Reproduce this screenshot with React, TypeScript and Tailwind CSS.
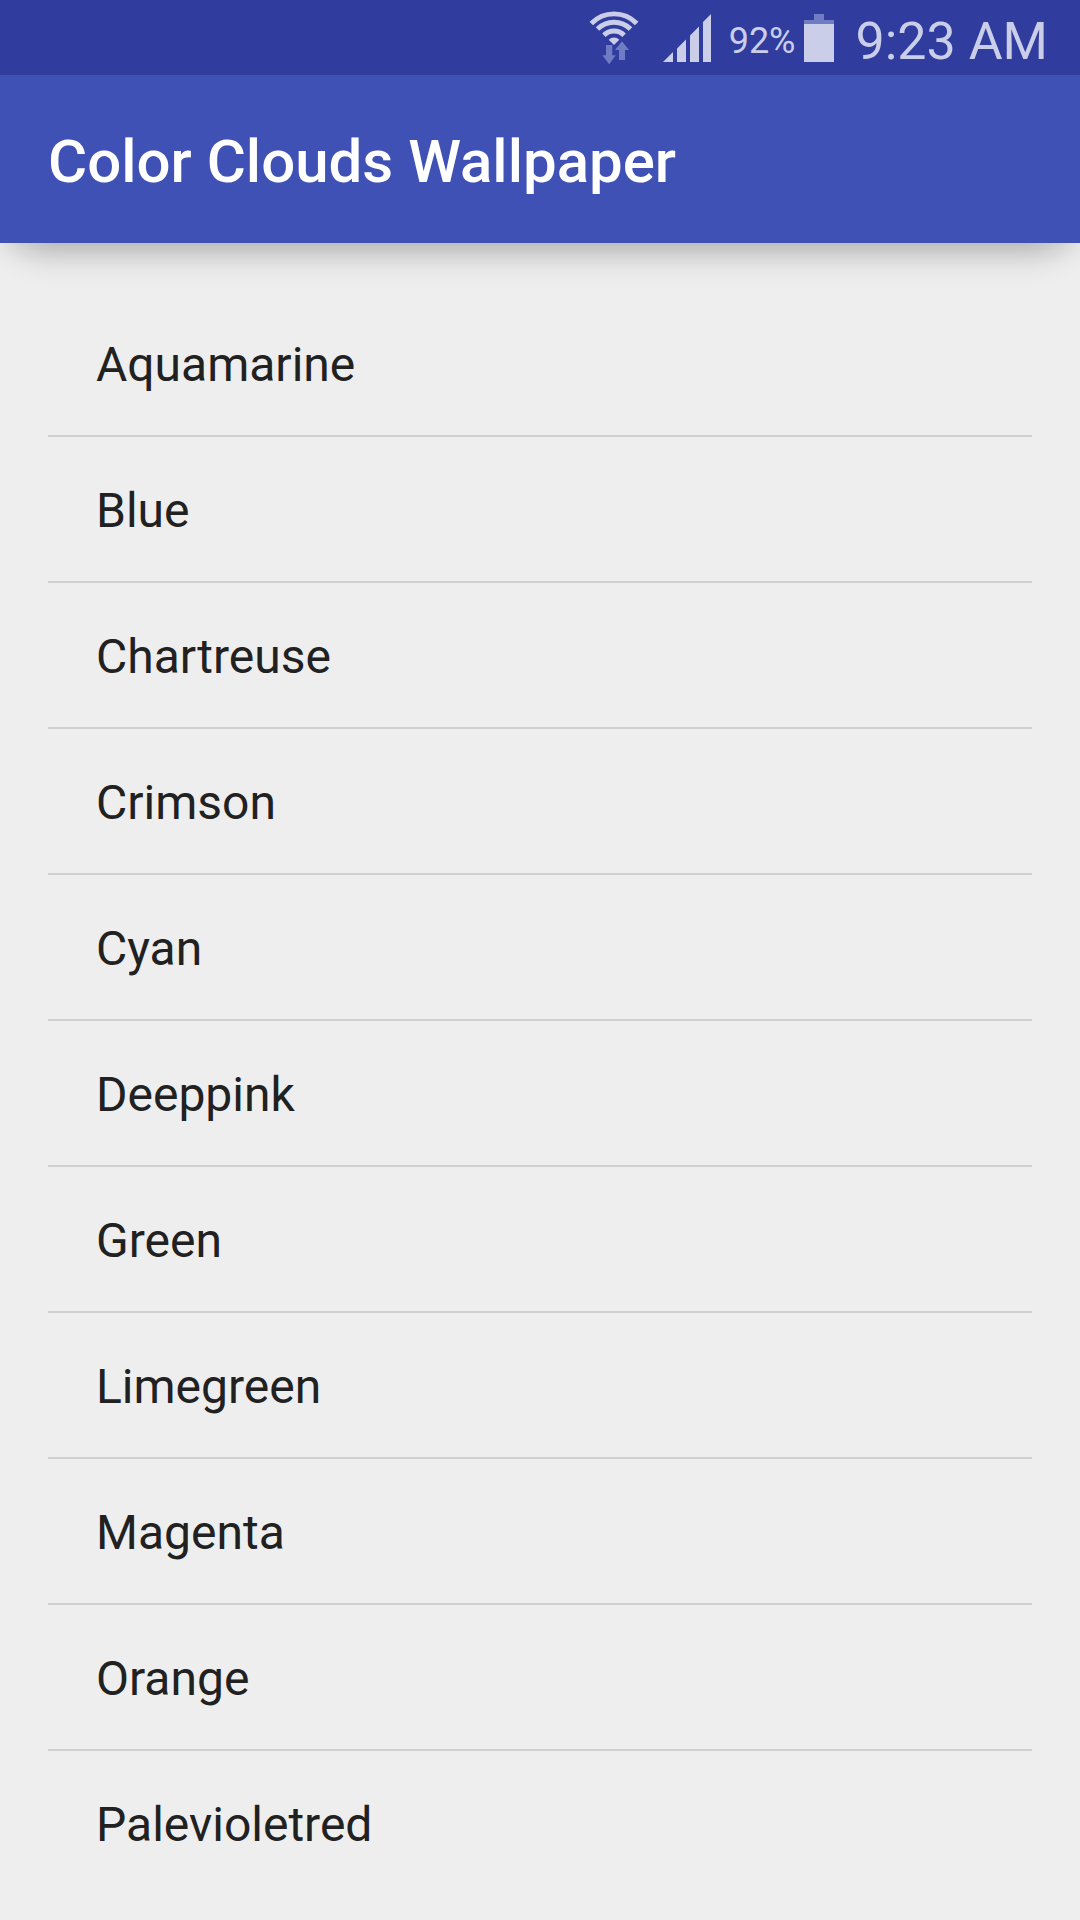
const colors = [
  "Aquamarine",
  "Blue",
  "Chartreuse",
  "Crimson",
  "Cyan",
  "Deeppink",
  "Green",
  "Limegreen",
  "Magenta",
  "Orange",
  "Palevioletred",
];

function WifiIcon() {
  return (
    <svg width="50" height="56" viewBox="0 0 50 56" fill="none" aria-hidden="true">
      <g stroke="currentColor" strokeWidth="4.9">
        <path d="M2.3 13.5A31.5 31.5 0 0 1 47.7 13.5" />
        <path d="M8.5 19A23.4 23.4 0 0 1 41.5 19" />
        <path d="M14.9 25.2A14.3 14.3 0 0 1 35.1 25.2" />
      </g>
      <path fill="currentColor" d="M19.7 29.7A7.5 7.5 0 0 1 30.3 29.7L25 35Z" />
      {/* data activity arrows */}
      <g fill="#6f7bc3">
        <path d="M17 35H23.3V45.3H26.7L20.2 54.3L13.3 45.3H17Z" />
        <path d="M33 31.3L40 40H36V50H30V40H26Z" />
      </g>
    </svg>
  );
}

function SignalIcon() {
  return (
    <svg width="48" height="48" viewBox="0 0 48 48" fill="currentColor" aria-hidden="true">
      <path d="M0 48L10 38V48Z" />
      <path d="M14 34.4L23 25.6V48H14Z" />
      <path d="M27 21.4L36 12.6V48H27Z" />
      <path d="M40 8L48 0V48H40Z" />
    </svg>
  );
}

function BatteryIcon() {
  return (
    <svg width="30" height="48" viewBox="0 0 30 48" aria-hidden="true">
      <path fill="#6f7bc3" d="M10 0H20V6H30V10H0V6H10Z" />
      <path fill="currentColor" d="M0 10H30V48H0Z" />
    </svg>
  );
}

function StatusBar() {
  return (
    <div className="flex h-[75px] items-center justify-end bg-[#303d9f] pr-8 text-[#cacee9]">
      <WifiIcon />
      <div className="ml-6">
        <SignalIcon />
      </div>
      <span className="ml-[18px] pt-1.5 text-4xl">92%</span>
      <div className="ml-2">
        <BatteryIcon />
      </div>
      <span className="ml-[22px] pt-2 text-[52px] leading-none">9:23 AM</span>
    </div>
  );
}

export default function App() {
  return (
    <div className="min-h-screen overflow-hidden bg-[#eeeeee] font-['Roboto',sans-serif] text-[#212121]">
      <header className="relative shadow-[0_8px_20px_0_rgba(0,0,0,0.08),0_34px_32px_-24px_rgba(0,0,0,0.2)]">
        <StatusBar />
        <div className="flex h-[168px] items-center bg-[#3f51b5] px-12 pt-1.5">
          <h1 className="text-6xl font-medium text-white">Color Clouds Wallpaper</h1>
        </div>
      </header>

      <main className="px-12 pt-12">
        <ul className="divide-y-2 divide-[#d0d0d0]">
          {colors.map((color) => (
            <li key={color}>
              <button type="button" className="h-36 w-full px-12 pt-1 text-left text-5xl">
                {color}
              </button>
            </li>
          ))}
        </ul>
      </main>
    </div>
  );
}
